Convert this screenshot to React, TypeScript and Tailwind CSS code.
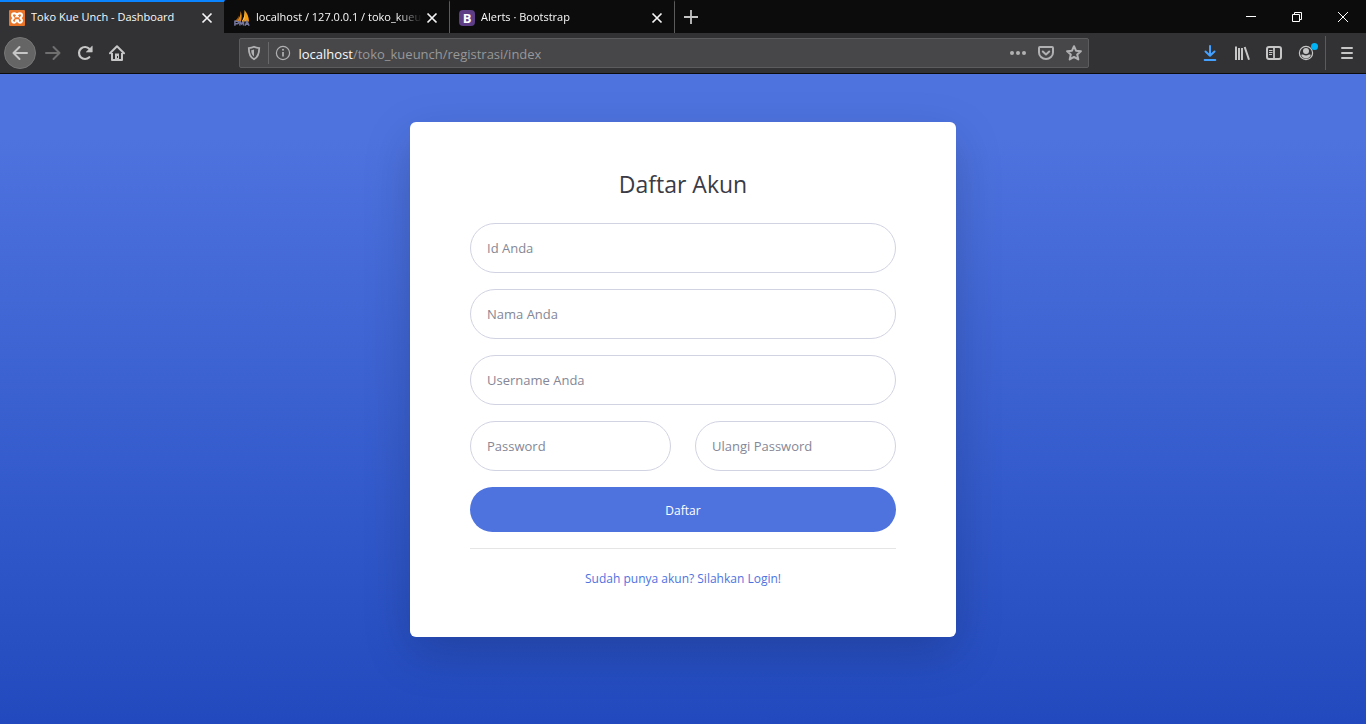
import type { ReactNode } from "react";

type IconProps = { children: ReactNode };

function Icon({ children }: IconProps) {
  return (
    <svg viewBox="0 0 16 16" className="size-4 shrink-0" fill="none" aria-hidden="true">
      {children}
    </svg>
  );
}

function XamppIcon() {
  return (
    <Icon>
      <rect width="16" height="16" rx="1" fill="#ea7427" />
      <path
        d="M8 5.600C7.500 4 6.500 3.300 5.200 3.300 3.800 3.300 3 4.300 3 5.400c0 1.200.8 1.700 1.700 2.600C3.800 8.900 3 9.400 3 10.600c0 1.100.8 2.100 2.200 2.100 1.300 0 2.100-1 1.800-2.500h2c-.3 1.500.5 2.500 1.800 2.500 1.400 0 2.200-1 2.200-2.100 0-1.200-.8-1.700-1.700-2.600.9-.9 1.700-1.400 1.700-2.600 0-1.100-.8-2.100-2.200-2.100C9.500 3.300 8.500 4 8 5.600z"
        stroke="#fff"
        strokeWidth="2"
        strokeLinejoin="round"
      />
      <path d="M6 6.700h4" stroke="#fff" strokeWidth="1.200" />
    </Icon>
  );
}

function SailIcon() {
  return (
    <Icon>
      <path d="M6.200 1C7 5 5.500 8.600 1.500 11.500h5.300C8.200 7.500 8 3.500 6.200 1z" fill="#e58a17" />
      <path d="M10.400 0c3 3 4.500 7 4.600 11.500H7.800c2.400-3.500 3.200-7.500 2.600-11.500z" fill="#f89c0e" />
      <path d="M4.500 5.500C4.200 7.800 2.700 9.800.3 11.300H3.500c1.200-1.600 1.400-3.800 1-5.800z" fill="#a8641c" />
      <path d="M10.400 0c.6 4 0 8-2.600 11.500h1.600c1.700-3.300 2.200-7.500 1-11.500z" fill="#ffc45a" />
      <path
        d="M.9 15.800v-4.600h2.400c1.500 0 1.500 2.600 0 2.600H1M5.900 15.500v-4l1.800 2.500 1.800-2.500v4M11.100 15.700l1.900-4.400 2.100 4.400M11.700 14.200h2.700"
        stroke="#74769e"
        strokeWidth="1.500"
      />
    </Icon>
  );
}

function BootstrapIcon() {
  return (
    <span className="flex size-4 shrink-0 items-center justify-center rounded-sm bg-[#5c3d86] text-[13px] leading-4 font-bold text-white">
      B
    </span>
  );
}

type TabProps = { icon: ReactNode; title: string; active?: boolean };

function Tab({ icon, title, active = false }: TabProps) {
  return (
    <div
      className={`flex h-full w-[225px] min-w-0 items-center border-t-2 border-r pr-[9px] pl-[9px] ${
        active ? "border-t-[#0a84ff] border-r-[#0c0c0d] bg-[#323234]" : "border-t-transparent border-r-[#5b5b5c]"
      }`}
    >
      {icon}
      <button
        type="button"
        className={`ml-1.5 min-w-0 flex-1 overflow-hidden text-left whitespace-nowrap ${
          active ? "" : "mask-r-from-85% mask-r-to-100%"
        }`}
      >
        {title}
      </button>
      <button type="button" aria-label={`Close ${title}`} className="ml-0.5 flex size-4 items-center justify-center">
        <Icon>
          <path d="M3.500 3.500l9 9M12.500 3.500l-9 9" stroke="#f4f4f5" strokeWidth="1.700" />
        </Icon>
      </button>
    </div>
  );
}

function TabStrip() {
  return (
    <div className="flex h-[33px] items-stretch bg-[#0c0c0d] text-[11px] text-[#f9f9fa]">
      <Tab icon={<XamppIcon />} title="Toko Kue Unch - Dashboard" active />
      <Tab icon={<SailIcon />} title="localhost / 127.0.0.1 / toko_kueu" />
      <Tab icon={<BootstrapIcon />} title="Alerts · Bootstrap" />
      <button type="button" aria-label="New tab" className="flex w-8 items-center justify-center">
        <Icon>
          <path d="M8 1v14M1 8h14" stroke="#c4c4c5" strokeWidth="1.800" />
        </Icon>
      </button>
      <div className="flex-1" />
      <button type="button" aria-label="Minimize" className="flex w-[46px] items-center justify-center">
        <Icon>
          <path d="M3 7.500h10" stroke="#fff" />
        </Icon>
      </button>
      <button type="button" aria-label="Restore" className="flex w-[46px] items-center justify-center">
        <Icon>
          <path d="M3.500 5.500h7v7h-7zM5.500 5.500v-2h7v7h-2" stroke="#fff" />
        </Icon>
      </button>
      <button type="button" aria-label="Close window" className="flex w-[46px] items-center justify-center">
        <Icon>
          <path d="M3 3l10 10M13 3L3 13" stroke="#fff" />
        </Icon>
      </button>
    </div>
  );
}

function ToolButton({ label, children }: { label: string; children: ReactNode }) {
  return (
    <button type="button" aria-label={label} className="flex size-8 shrink-0 items-center justify-center">
      {children}
    </button>
  );
}

function AddressBar() {
  return (
    <div className="mx-px flex h-[30px] min-w-0 flex-8 items-center rounded-xs border border-[#5c5c5e] bg-[#474749] px-1.5 text-[#b1b1b3]">
      <Icon>
        <path
          d="M8 1.800c1.800.9 3.600 1.200 5.200 1.300 0 5-.6 9-5.200 11.200C3.400 12.100 2.800 8.100 2.800 3.100 4.400 3 6.200 2.700 8 1.800z"
          stroke="currentColor"
          strokeWidth="1.800"
        />
        <path d="M8 4.500v7C6 10 5.300 8 5.200 5.200 6.200 5.100 7.100 4.900 8 4.500z" fill="currentColor" />
      </Icon>
      <div className="mx-1.5 h-[22px] w-px bg-[#68686b]" />
      <Icon>
        <circle cx="8" cy="8" r="6.600" stroke="currentColor" strokeWidth="1.200" />
        <path d="M8 7v4.500" stroke="currentColor" strokeWidth="1.700" />
        <circle cx="8" cy="4.800" r="1" fill="currentColor" />
      </Icon>
      <div className="ml-2 flex min-w-0 flex-1 items-center pt-[3px] text-[13px]">
        <label htmlFor="address" className="text-[#f9f9fa]">
          localhost
        </label>
        <input
          id="address"
          type="text"
          defaultValue="/toko_kueunch/registrasi/index"
          className="min-w-0 flex-1 bg-transparent text-[#98989a] outline-none"
        />
      </div>
      <div className="flex items-center gap-3">
        <button type="button" aria-label="Page actions">
          <Icon>
            <g fill="currentColor">
              <circle cx="2" cy="8" r="2" />
              <circle cx="8" cy="8" r="2" />
              <circle cx="14" cy="8" r="2" />
            </g>
          </Icon>
        </button>
        <button type="button" aria-label="Save to Pocket">
          <Icon>
            <path
              d="M1.900 2h12.200c.5 0 .9.400.9.900V7.500a7 6.500 0 0 1-14 0V2.900c0-.5.400-.9.900-.9z"
              stroke="currentColor"
              strokeWidth="2"
            />
            <path
              d="M4.800 6.500L8 9.500l3.200-3"
              stroke="currentColor"
              strokeWidth="2"
              strokeLinecap="round"
              strokeLinejoin="round"
            />
          </Icon>
        </button>
        <button type="button" aria-label="Bookmark">
          <Icon>
            <path
              d="M8 1.200l2 4.500 4.900.5-3.700 3.300 1.100 4.900L8 11.900l-4.300 2.500 1.100-4.900L1.100 6.200 6 5.700z"
              stroke="currentColor"
              strokeWidth="2"
              strokeLinejoin="round"
            />
          </Icon>
        </button>
      </div>
    </div>
  );
}

function Toolbar() {
  return (
    <div className="flex h-[41px] items-center border-b border-[#0c0c0d] bg-[#323234] pr-[3px] pl-1 text-[#c6c6c7]">
      <button
        type="button"
        aria-label="Back"
        className="flex size-8 shrink-0 items-center justify-center rounded-full border border-[#777778] bg-[#656566]"
      >
        <Icon>
          <path
            d="M15 8H1.500M7.500 2L1.500 8l6 6"
            stroke="currentColor"
            strokeWidth="2"
            strokeLinecap="round"
            strokeLinejoin="round"
          />
        </Icon>
      </button>
      <div className="ml-px flex">
        <ToolButton label="Forward">
          <Icon>
            <path
              d="M1 8h13.500M8.500 2l6 6-6 6"
              stroke="#6f6f70"
              strokeWidth="2"
              strokeLinecap="round"
              strokeLinejoin="round"
            />
          </Icon>
        </ToolButton>
        <ToolButton label="Reload">
          <Icon>
            <path d="M12.300 12.200a6 6 0 1 1 .2-8.200" stroke="currentColor" strokeWidth="2.200" strokeLinecap="round" />
            <path
              d="M15.300 1v6.100H9.200z"
              fill="currentColor"
              stroke="currentColor"
              strokeWidth=".5"
              strokeLinejoin="round"
            />
          </Icon>
        </ToolButton>
        <ToolButton label="Home">
          <Icon>
            <path
              d="M1 8.300l7-7 7 7"
              stroke="currentColor"
              strokeWidth="2"
              strokeLinecap="round"
              strokeLinejoin="round"
            />
            <path d="M3 8v7h10V8" stroke="currentColor" strokeWidth="2" strokeLinejoin="round" />
            <path d="M6 8.500h4V15H6z" fill="currentColor" />
            <path d="M8.500 11v2" stroke="#323234" />
          </Icon>
        </ToolButton>
      </div>
      <div className="flex-1" />
      <AddressBar />
      <div className="flex-1" />
      <ToolButton label="Downloads">
        <Icon>
          <path
            d="M8 1v9M3.500 6.500L8 10.700l4.500-4.200M2.700 15h10.600"
            stroke="#45a1ff"
            strokeWidth="2"
            strokeLinecap="round"
            strokeLinejoin="round"
          />
        </Icon>
      </ToolButton>
      <ToolButton label="Library">
        <Icon>
          <path d="M2 1.500V15M5 3v12M8 3v12M10.700 2l4.300 12.700" stroke="currentColor" strokeWidth="2" />
        </Icon>
      </ToolButton>
      <ToolButton label="Sidebars">
        <Icon>
          <rect x="1" y="2" width="14" height="12" rx="2" stroke="currentColor" strokeWidth="2" />
          <path d="M8 2v12" stroke="currentColor" strokeWidth="1.800" />
          <path d="M3 5.500h3.500M3 7.500h3.500M3 9.500h3" stroke="currentColor" />
        </Icon>
      </ToolButton>
      <ToolButton label="Account">
        <span className="relative flex">
          <Icon>
            <circle cx="8" cy="8" r="6.600" stroke="currentColor" strokeWidth="1.200" />
            <circle cx="8" cy="6" r="3" fill="currentColor" />
            <path
              d="M3.200 10c.8-.8 1.700-.6 2.300-.2 1.500 1 3.500 1 5 0 .6-.4 1.500-.6 2.300.2A5.300 5.300 0 0 1 8 13.400 5.300 5.300 0 0 1 3.200 10z"
              fill="currentColor"
            />
          </Icon>
          <span className="absolute -top-0.5 -right-1 size-[7px] rounded-full bg-[#00b3f4]" />
        </span>
      </ToolButton>
      <div className="mr-[5px] ml-[3px] h-[34px] w-px shrink-0 bg-[#5b5b5d]" />
      <ToolButton label="Menu">
        <Icon>
          <path d="M3 3h10M3 8h10M3 13h10" stroke="currentColor" strokeWidth="2" strokeLinecap="round" />
        </Icon>
      </ToolButton>
    </div>
  );
}

function Field({ label, type = "text" }: { label: string; type?: string }) {
  return (
    <input
      type={type}
      aria-label={label}
      placeholder={label}
      className="h-[50px] w-full min-w-0 rounded-full border border-[#d1d3e2] bg-white px-4 text-[13px] text-[#6e707e] outline-none placeholder:text-[#858796] focus:border-[#bac8f3]"
    />
  );
}

function RegisterCard() {
  return (
    <section className="w-full max-w-[546px] rounded-md bg-white px-[60px] py-12 shadow-[0_16px_48px_rgba(0,0,0,0.175)]">
      <h1 className="mb-6 text-center text-[23px] leading-[29px] text-[#3a3b45]">Daftar Akun</h1>
      <form className="flex flex-col gap-4" onSubmit={(event) => event.preventDefault()}>
        <Field label="Id Anda" />
        <Field label="Nama Anda" />
        <Field label="Username Anda" />
        <div className="grid grid-cols-2 gap-6">
          <Field label="Password" type="password" />
          <Field label="Ulangi Password" type="password" />
        </div>
        <button type="submit" className="h-[45px] w-full rounded-full bg-[#4e73df] pt-0.5 text-xs text-white">
          Daftar
        </button>
      </form>
      <hr className="my-4 border-black/10" />
      <p className="pt-1 text-center text-xs leading-5">
        <a href="#login" className="text-[#4e73df]">
          Sudah punya akun? Silahkan Login!
        </a>
      </p>
    </section>
  );
}

export default function App() {
  return (
    <div className="flex min-h-screen flex-col font-['Open_Sans','Noto_Sans',sans-serif]">
      <header>
        <TabStrip />
        <Toolbar />
      </header>
      <main className="flex flex-1 items-start justify-center bg-[linear-gradient(180deg,#4e73df_10%,#224abe_100%)] py-12">
        <RegisterCard />
      </main>
    </div>
  );
}
